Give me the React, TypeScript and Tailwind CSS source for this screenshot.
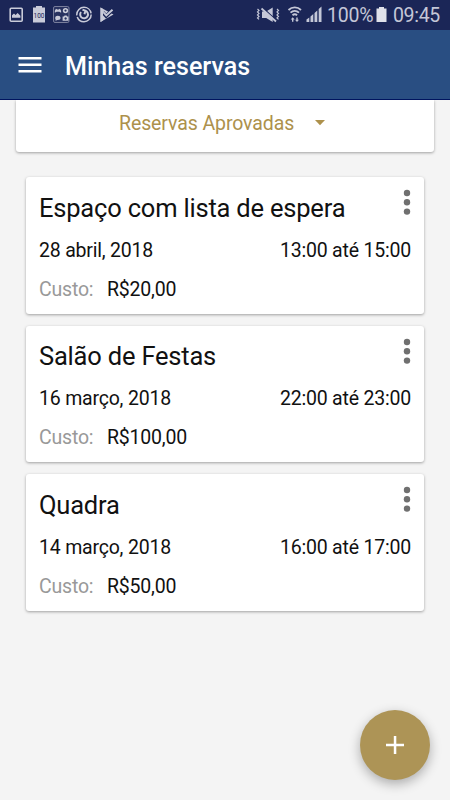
type Reservation = {
  title: string;
  date: string;
  time: string;
  cost: string;
};

const reservations: Reservation[] = [
  { title: 'Espaço com lista de espera', date: '28 abril, 2018', time: '13:00 até 15:00', cost: 'R$20,00' },
  { title: 'Salão de Festas', date: '16 março, 2018', time: '22:00 até 23:00', cost: 'R$100,00' },
  { title: 'Quadra', date: '14 março, 2018', time: '16:00 até 17:00', cost: 'R$50,00' },
];

function NotificationIcons() {
  return (
    <svg width="120" height="30" viewBox="0 0 120 30" fill="#c9cbd9">
      {/* Gallery */}
      <rect x="10.2" y="8.2" width="12" height="13" rx="1" fill="none" stroke="#c9cbd9" strokeWidth="1.6" />
      <path d="M12 17.8v-2.6l2-1.7 1.6 1.6 2-2 2.8 2.6v2.1z" />
      {/* Battery */}
      <path d="M36 6h6v1.600h3V22.500H33V7.600h3z" />
      <text x="39" y="17.600" fontSize="6.500" textAnchor="middle" fill="#1b2657">100</text>
      {/* Apps folder */}
      <rect x="53.500" y="6.500" width="15.500" height="16" rx="1.500" fill="#283260" stroke="#9da1b8" strokeWidth=".7" />
      <path d="M54.800 12.700v-2l1.200-1.900 1.200.8h1.500l1.200-.8 1.200 1.900v2l-1.800-1h-2.600z" />
      <circle cx="65.500" cy="10.600" r="1.900" fill="none" stroke="#c9cbd9" strokeWidth="1.600" />
      <ellipse cx="57.900" cy="17.900" rx="2.700" ry="2.100" />
      <path d="M56 18l-.5 2.800 2.500-1z" />
      <path fillRule="evenodd" d="M62.600 16.500h1.200l.8-.9h2l.7.900h1.200v4.300h-5.900zM65.600 17.300a1.200 1.200 0 1 0 .01 0z" />
      {/* Sync ring */}
      <circle cx="84" cy="14.500" r="7.200" fill="none" stroke="#c9cbd9" strokeWidth="1.500" strokeDasharray="20 1.500 22.200 1.500" />
      <path d="M81 12a3.900 3.900 0 1 0 4.300-1.300M82.500 9.800l2.800.8-.8 3.700" fill="none" stroke="#c9cbd9" strokeWidth="2" />
      {/* Play check */}
      <path d="M100.500 7.500v14.500l13-7.400z" />
      <path d="M103 12.500l3.200 3.600 7-6.800" fill="none" stroke="#1b2657" strokeWidth="3.600" />
      <path d="M103.300 12.200l3 3.300 6.200-5.800" fill="none" stroke="#c9cbd9" strokeWidth="1.900" />
      <path d="M100.500 7.500v14.500l2.500-1.500V9z" />
    </svg>
  );
}

function SignalIcons() {
  return (
    <svg width="70" height="30" viewBox="254 0 70 30" fill="#c4c7d7">
      {/* Vibrate */}
      <path d="M262 11.500h4.200l6.500-4v14.500l-6.500-4H262z" />
      <path d="M262.500 7.500l13.500 12.500" stroke="#1b2657" strokeWidth="1.200" />
      <path d="M261.500 8.500l14.500 13" stroke="#c4c7d7" strokeWidth="1.800" />
      <path d="M257.500 9l1.500 1.400-1.500 1.500 1.500 1.500-1.500 1.500 1.500 1.500-1.500 1.500 1.500 1.500M277 9l1.500 1.400-1.500 1.500 1.500 1.500-1.500 1.500 1.500 1.500-1.500 1.500 1.500 1.500" fill="none" stroke="#c4c7d7" strokeWidth="1.200" />
      {/* Wi-fi */}
      <path d="M288.500 10c3.600-3.400 9-3.400 12.500 0M290.500 12.700c2.500-2.300 6-2.300 8.500 0M292.500 15.200c1.400-1.200 3.200-1.200 4.600 0" fill="none" stroke="#c4c7d7" strokeWidth="1.800" />
      <path d="M292.700 17.300l2 2.200h-1.300v2.200H292v-2.200h-1.300zM297 22l-2-2.200h1.300v-2.300h1.400v2.300h1.300z" />
      {/* Signal */}
      <path d="M306.500 19.500l2.800-2v4.500h-2.800zM310.500 16.500l2.800-2.500v8h-2.800zM314.500 13l2.800-2.500V22h-2.800zM318.700 9l2.800-2.500V22h-2.800z" />
    </svg>
  );
}

function StatusBar() {
  return (
    <div className="flex h-[30px] items-center justify-between bg-[#1b2657]">
      <NotificationIcons />
      <div className="flex h-[30px] items-center pr-[10px] text-[#c4c7d7]">
        <SignalIcons />
        <span className="ml-[3px] w-[47px] pt-[1px] text-[19.5px] leading-[30px] tracking-[-0.2px] whitespace-nowrap">100%</span>
        <svg className="ml-[2px]" width="11" height="30" viewBox="0 0 11 30" fill="#dfe1ea">
          <path d="M3 7h5v1.500h2.500V22H.5V8.500H3z" />
        </svg>
        <span className="ml-[6px] pt-[1px] text-[19.5px] leading-[30px] tracking-[-0.3px]">09:45</span>
      </div>
    </div>
  );
}

function ReservationCard({ title, date, time, cost }: Reservation) {
  return (
    <div className="h-[136.5px] rounded-[3px] bg-white px-[13px] pt-[15px] shadow-[0_1px_3px_rgba(0,0,0,0.35)]">
      <div className="flex justify-between">
        <h2 className="pt-[0.5px] text-[25.5px] leading-[30px] tracking-[-0.2px]">{title}</h2>
        <svg className="-mt-[3px] -mr-[2px]" width="12" height="28" viewBox="0 0 12 28" fill="#707070">
          <circle cx="6" cy="4" r="3.200" />
          <circle cx="6" cy="13.300" r="3.200" />
          <circle cx="6" cy="22.600" r="3.200" />
        </svg>
      </div>
      <div className="mt-4 flex justify-between text-[19.5px] leading-6 tracking-[-0.2px]">
        <span>{date}</span>
        <span>{time}</span>
      </div>
      <div className="mt-[15px] flex text-[19.5px] leading-6 tracking-[-0.2px]">
        <span className="w-[68px] text-[#999]">Custo:</span>
        <span>{cost}</span>
      </div>
    </div>
  );
}

export default function App() {
  return (
    <div className="flex h-[800px] w-[450px] flex-col overflow-hidden bg-[#f4f4f4] font-['Roboto',sans-serif] text-[#111]">
      <StatusBar />

      <header className="flex h-[70px] items-center border-b border-[#00145f] bg-[#294e82] pl-[18px] text-white">
        <svg width="24" height="18" viewBox="0 0 24 18" fill="#fff">
          <path d="M.5 1h23v2.500H.5zM.5 7.500h23V10H.5zM.5 14h23v2.500H.5z" />
        </svg>
        <h1 className="ml-[23px] pt-[5px] text-[25.1px] leading-[30px] font-medium">Minhas reservas</h1>
      </header>

      {/* Filter */}
      <div className="mx-4 flex h-[52px] items-center rounded-b-[3px] bg-white pb-[6px] pl-[103px] text-[19.5px] tracking-[-0.1px] text-[#ad914c] shadow-[0_1px_3px_rgba(0,0,0,0.35)] [clip-path:inset(0_-6px_-6px_-6px)]">
        <span className="pt-[2px]">Reservas Aprovadas</span>
        <svg className="ml-[21px]" width="10" height="6" viewBox="0 0 10 6" fill="#ad914c">
          <path d="M0 0h10L5 5.200z" />
        </svg>
      </div>

      <main className="mx-[26px] mt-[25px] flex flex-col gap-[12.2px]">
        {reservations.map(r => (
          <ReservationCard key={r.title} {...r} />
        ))}
      </main>

      <button className="mt-auto mr-5 mb-5 flex size-[70px] items-center justify-center self-end rounded-full bg-[#ad9456] shadow-[0_4px_12px_rgba(0,0,0,0.3)]">
        <svg width="20" height="20" viewBox="0 0 20 20" fill="#fff">
          <path d="M8.800 1h2.500v7.800H19v2.400h-7.700V19H8.800v-7.800H1V8.800h7.800z" />
        </svg>
      </button>
    </div>
  );
}
